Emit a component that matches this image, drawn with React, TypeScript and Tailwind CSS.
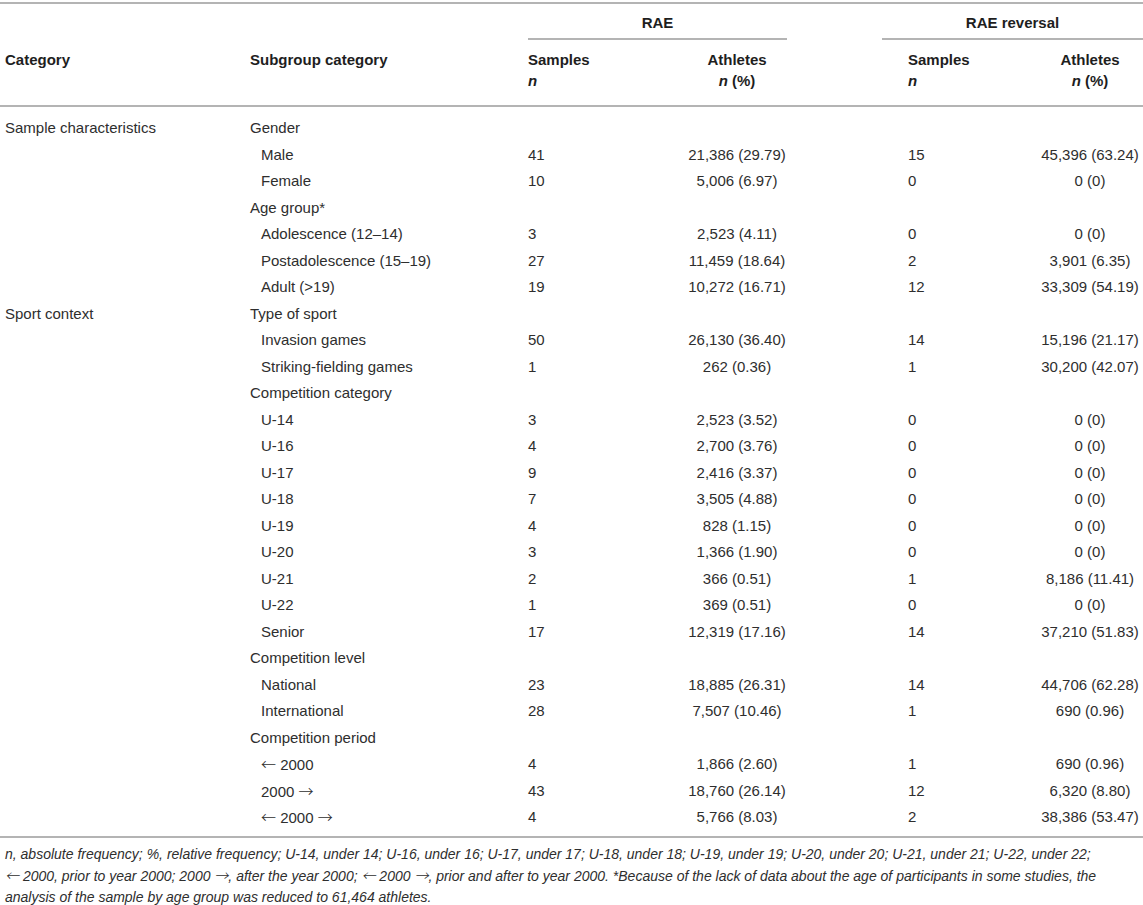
import React from 'react';

type Row = { cat?: string; sub: string; head?: boolean; a?: string; b?: string; c?: string; d?: string };

const rows: Row[] = [
  { cat: 'Sample characteristics', sub: 'Gender', head: true },
  { sub: 'Male', a: '41', b: '21,386 (29.79)', c: '15', d: '45,396 (63.24)' },
  { sub: 'Female', a: '10', b: '5,006 (6.97)', c: '0', d: '0 (0)' },
  { sub: 'Age group*', head: true },
  { sub: 'Adolescence (12–14)', a: '3', b: '2,523 (4.11)', c: '0', d: '0 (0)' },
  { sub: 'Postadolescence (15–19)', a: '27', b: '11,459 (18.64)', c: '2', d: '3,901 (6.35)' },
  { sub: 'Adult (>19)', a: '19', b: '10,272 (16.71)', c: '12', d: '33,309 (54.19)' },
  { cat: 'Sport context', sub: 'Type of sport', head: true },
  { sub: 'Invasion games', a: '50', b: '26,130 (36.40)', c: '14', d: '15,196 (21.17)' },
  { sub: 'Striking-fielding games', a: '1', b: '262 (0.36)', c: '1', d: '30,200 (42.07)' },
  { sub: 'Competition category', head: true },
  { sub: 'U-14', a: '3', b: '2,523 (3.52)', c: '0', d: '0 (0)' },
  { sub: 'U-16', a: '4', b: '2,700 (3.76)', c: '0', d: '0 (0)' },
  { sub: 'U-17', a: '9', b: '2,416 (3.37)', c: '0', d: '0 (0)' },
  { sub: 'U-18', a: '7', b: '3,505 (4.88)', c: '0', d: '0 (0)' },
  { sub: 'U-19', a: '4', b: '828 (1.15)', c: '0', d: '0 (0)' },
  { sub: 'U-20', a: '3', b: '1,366 (1.90)', c: '0', d: '0 (0)' },
  { sub: 'U-21', a: '2', b: '366 (0.51)', c: '1', d: '8,186 (11.41)' },
  { sub: 'U-22', a: '1', b: '369 (0.51)', c: '0', d: '0 (0)' },
  { sub: 'Senior', a: '17', b: '12,319 (17.16)', c: '14', d: '37,210 (51.83)' },
  { sub: 'Competition level', head: true },
  { sub: 'National', a: '23', b: '18,885 (26.31)', c: '14', d: '44,706 (62.28)' },
  { sub: 'International', a: '28', b: '7,507 (10.46)', c: '1', d: '690 (0.96)' },
  { sub: 'Competition period', head: true },
  { sub: '← 2000', a: '4', b: '1,866 (2.60)', c: '1', d: '690 (0.96)' },
  { sub: '2000 →', a: '43', b: '18,760 (26.14)', c: '12', d: '6,320 (8.80)' },
  { sub: '← 2000 →', a: '4', b: '5,766 (8.03)', c: '2', d: '38,386 (53.47)' },
];

// arrows come out tiny in Liberation Sans, the CJK face has the long thin ones
function Arrows({ text }: { text: string }) {
  return (
    <>
      {text.split(/([←→])/).map((part, i) =>
        part === '←' || part === '→' ? (
          <span key={i} className="font-['Noto_Sans_CJK_SC',sans-serif] font-light">{part}</span>
        ) : (
          part
        )
      )}
    </>
  );
}

const Rule = () => <div className="h-[2px] w-full bg-[#b4b4b4]" />;

export default function App() {
  return (
    <div className="w-[1143px] bg-white pt-[2px] font-['Liberation_Sans',Arial,sans-serif] text-[15px] text-[#2e2e2e]">
      <Rule />

      {/* header */}
      <div className="flex pb-[14px] font-bold leading-[20px] text-[#1e1e1e]">
        <div className="w-[250px] pl-[5px] pt-[46px]">Category</div>
        <div className="w-[278px] pt-[46px]">Subgroup category</div>
        <div className="w-[259px]">
          <div className="pt-[9px] pb-[5px] text-center">RAE</div>
          <Rule />
          <div className="flex pt-[10px]">
            <div className="w-[159px]">Samples</div>
            <div className="w-[100px] text-center">Athletes</div>
          </div>
          <div className="flex pt-[1px]">
            <div className="w-[159px] italic">n</div>
            <div className="w-[100px] text-center"><span className="italic">n</span> (%)</div>
          </div>
        </div>
        <div className="w-[95px]" />
        <div className="w-[261px]">
          <div className="pt-[9px] pb-[5px] text-center">RAE reversal</div>
          <Rule />
          <div className="flex pt-[10px]">
            <div className="w-[155px] pl-[26px]">Samples</div>
            <div className="w-[106px] text-center">Athletes</div>
          </div>
          <div className="flex pt-[1px]">
            <div className="w-[155px] pl-[26px] italic">n</div>
            <div className="w-[106px] text-center"><span className="italic">n</span> (%)</div>
          </div>
        </div>
      </div>
      <Rule />

      {/* body */}
      <div className="pt-[8px] pb-[5px] leading-[26.5px]">
        {rows.map((r, i) => (
          <div key={i} className="flex h-[26.5px] whitespace-nowrap">
            <div className="w-[250px] pl-[5px]">{r.cat}</div>
            <div className={r.head ? 'w-[278px]' : 'w-[278px] pl-[11px]'}>
              <Arrows text={r.sub} />
            </div>
            <div className="w-[159px]">{r.a}</div>
            <div className="w-[100px] text-center">{r.b}</div>
            <div className="w-[95px]" />
            <div className="w-[155px] pl-[26px]">{r.c}</div>
            <div className="w-[106px] text-center">{r.d}</div>
          </div>
        ))}
      </div>
      <Rule />

      {/* footnote */}
      <p className="whitespace-nowrap pl-[5px] pt-[6px] text-[14px] italic leading-[21px] text-[#2e2e2e]">
        n, absolute frequency; %, relative frequency; U-14, under 14; U-16, under 16; U-17, under 17; U-18, under 18; U-19, under 19; U-20, under 20; U-21, under 21; U-22, under 22;
        <br />
        <Arrows text="← 2000, prior to year 2000; 2000 →, after the year 2000; ← 2000 →, prior and after to year 2000. *Because of the lack of data about the age of participants in some studies, the" />
        <br />
        analysis of the sample by age group was reduced to 61,464 athletes.
      </p>
    </div>
  );
}
